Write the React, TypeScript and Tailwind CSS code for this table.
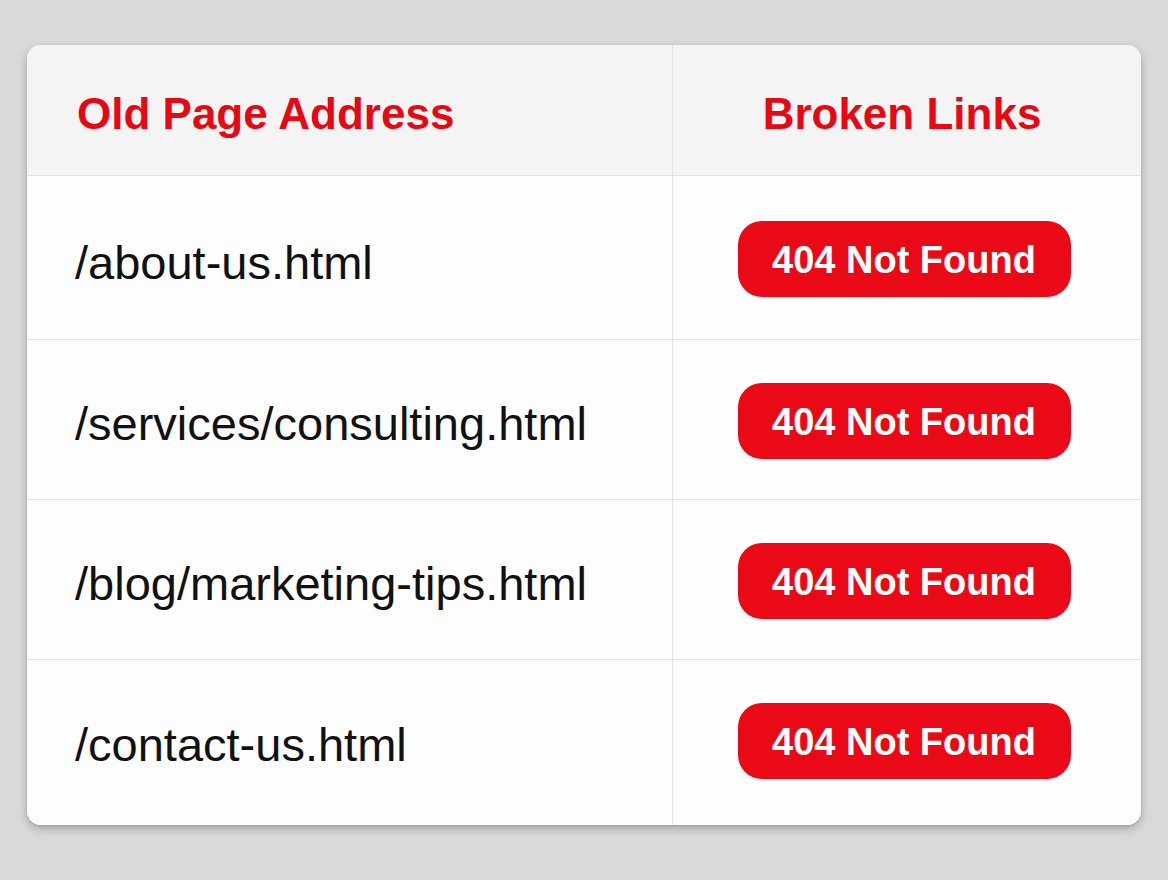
import React from "react";

const rows = [
  { path: "/about-us.html", h: "h-[164px]", pad: "pt-[3px]" },
  { path: "/services/consulting.html", h: "h-[160px]", pad: "pt-[2px]" },
  { path: "/blog/marketing-tips.html", h: "h-[160px]", pad: "pt-[2px]" },
  { path: "/contact-us.html", h: "h-[165px]", pad: "pb-[3px]" },
];

export default function App() {
  return (
    <div
      className="w-[1168px] h-[880px] bg-[#d9d9d9] pt-[45px] pl-[27px]"
      style={{ fontFamily: '"Liberation Sans", Arial, sans-serif' }}
    >
      <div className="w-[1114px] rounded-[14px] bg-white overflow-hidden shadow-[0_4px_10px_rgba(0,0,0,0.22),0_1px_3px_rgba(0,0,0,0.12)]">
        <div className="flex h-[131px] bg-[#f4f4f4] border-b border-[#e3e3e3]">
          <div className="w-[646px] border-r border-[#e3e3e3] flex items-center pl-[50px]">
            <span className="text-[44px] font-bold text-[#e50914] leading-none pt-[7px]">
              Old Page Address
            </span>
          </div>
          <div className="flex-1 flex items-center justify-center pr-[10px]">
            <span className="text-[44px] font-bold text-[#e50914] leading-none pt-[7px]">
              Broken Links
            </span>
          </div>
        </div>
        {rows.map((r, i) => (
          <div
            key={r.path}
            className={`flex ${r.h} bg-[#fdfdfd] ${i < rows.length - 1 ? "border-b border-[#e3e3e3]" : ""}`}
          >
            <div className={`w-[646px] border-r border-[#e3e3e3] flex items-center pl-[48px] ${r.pad}`}>
              <span className="text-[47px] text-[#111111] leading-none pt-[6px]">
                {r.path}
              </span>
            </div>
            <div className={`flex-1 flex items-center justify-center pr-[6px] ${r.pad}`}>
              <div className="w-[333px] h-[76px] rounded-[24px] bg-[#ea0a17] flex items-center justify-center">
                <span className="text-[38px] font-bold text-white leading-none pt-[2px]">
                  404 Not Found
                </span>
              </div>
            </div>
          </div>
        ))}
      </div>
    </div>
  );
}
